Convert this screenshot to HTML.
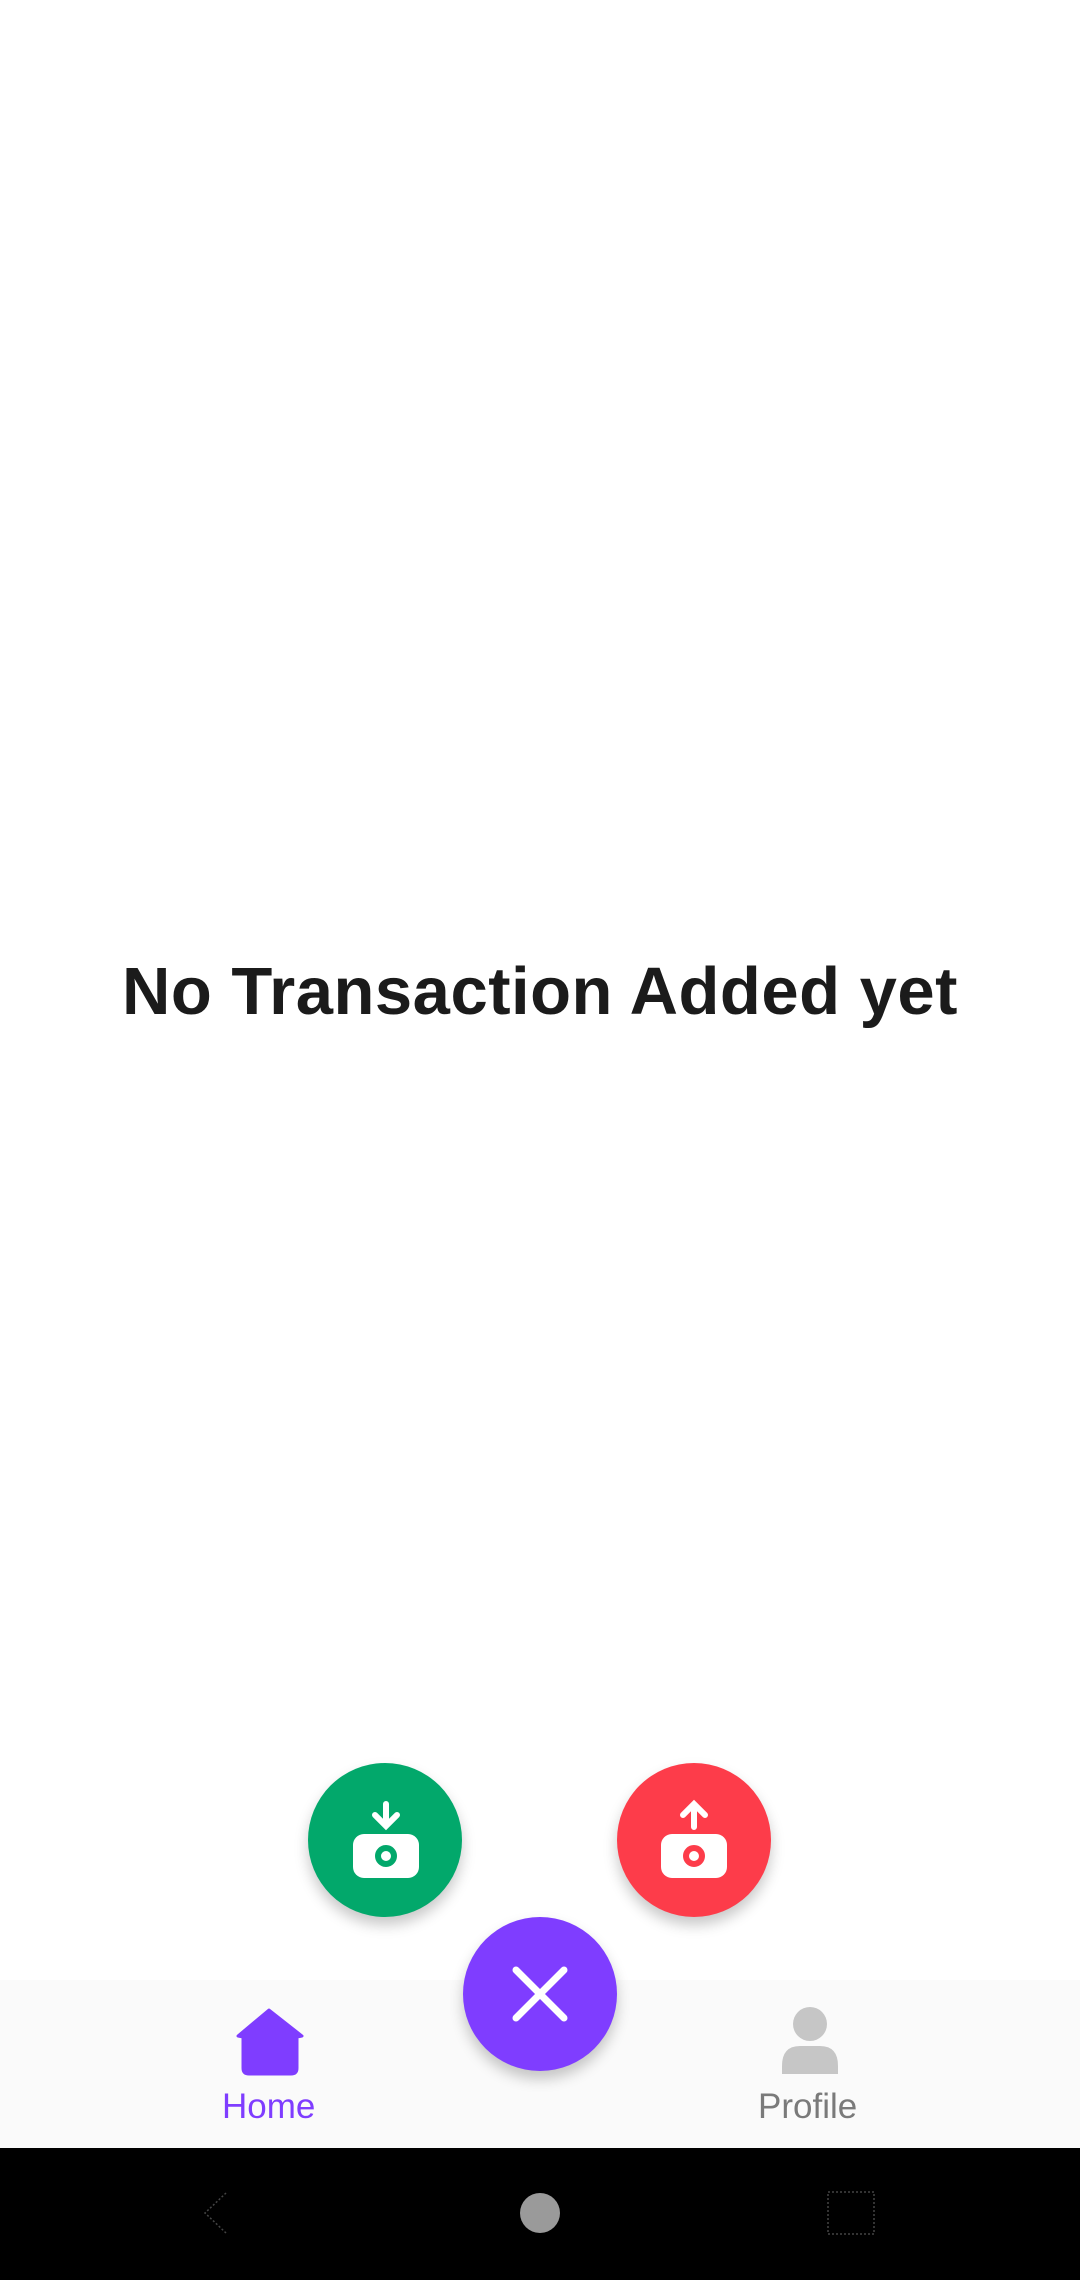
<!DOCTYPE html>
<html><head><meta charset="utf-8"><style>
html,body{margin:0;padding:0;}
body{width:1080px;height:2280px;position:relative;background:#fff;font-family:"Liberation Sans",sans-serif;overflow:hidden;}
.t{position:absolute;left:0;width:1080px;top:953px;text-align:center;font-size:67px;font-weight:bold;color:#1b1b1b;letter-spacing:0.5px;}
.nav{position:absolute;left:0;top:1980px;width:1080px;height:168px;background:#fafafa;}
.sys{position:absolute;left:0;top:2148px;width:1080px;height:132px;background:#000;}
.fab{position:absolute;width:154px;height:154px;border-radius:50%;box-shadow:0 8px 14px rgba(0,0,0,0.22);}
.lbl{position:absolute;font-size:35px;top:2087px;}
</style></head><body>
<div class="t">No Transaction Added yet</div>
<div class="nav"></div>
<div class="sys"></div>
<div class="fab" style="left:308px;top:1763px;background:#02a86b"></div>
<div class="fab" style="left:617px;top:1763px;background:#fd3c4a"></div>
<div class="fab" style="left:463px;top:1917px;background:#7f3dff"></div>
<svg width="1080" height="2280" style="position:absolute;left:0;top:0">
 <g fill="#fff">
  <rect x="353" y="1834" width="66" height="44" rx="11"/>
  <rect x="661" y="1834" width="66" height="44" rx="11"/>
 </g>
 <circle cx="386" cy="1856" r="8" fill="none" stroke="#02a86b" stroke-width="6"/>
 <circle cx="694" cy="1856" r="8" fill="none" stroke="#fd3c4a" stroke-width="6"/>
 <g stroke="#fff" stroke-width="6" stroke-linecap="round" fill="none">
  <path d="M386 1804V1826M375 1815L386 1826L397 1815"/>
  <path d="M694 1827V1804M683 1815L694 1804L705 1815"/>
  <path d="M516 1970L564 2018M564 1970L516 2018" stroke-width="7"/>
 </g>
 <path d="M269 2010L302 2036L297 2037V2068Q297 2074 291 2074H249Q243 2074 243 2068V2037L238 2036Z" fill="#7f3dff" stroke="#7f3dff" stroke-width="3" stroke-linejoin="round"/>
 <ellipse cx="810" cy="2024" rx="17" ry="17" fill="#c6c6c6"/>
 <path d="M782 2074V2066Q782 2046 800 2046H820Q838 2046 838 2066V2074Z" fill="#c6c6c6"/>
 <circle cx="540" cy="2213" r="20" fill="#9a9a9a"/>
 <path d="M226 2193L205 2213L226 2233" fill="none" stroke="#444" stroke-width="1.5" stroke-dasharray="2 2"/>
 <rect x="828" y="2192" width="46" height="42" fill="none" stroke="#444" stroke-width="1.5" stroke-dasharray="2 2"/>
</svg>
<div class="lbl" style="left:222px;color:#7f3dff">Home</div>
<div class="lbl" style="left:758px;color:#7a7a7a">Profile</div>
</body></html>
